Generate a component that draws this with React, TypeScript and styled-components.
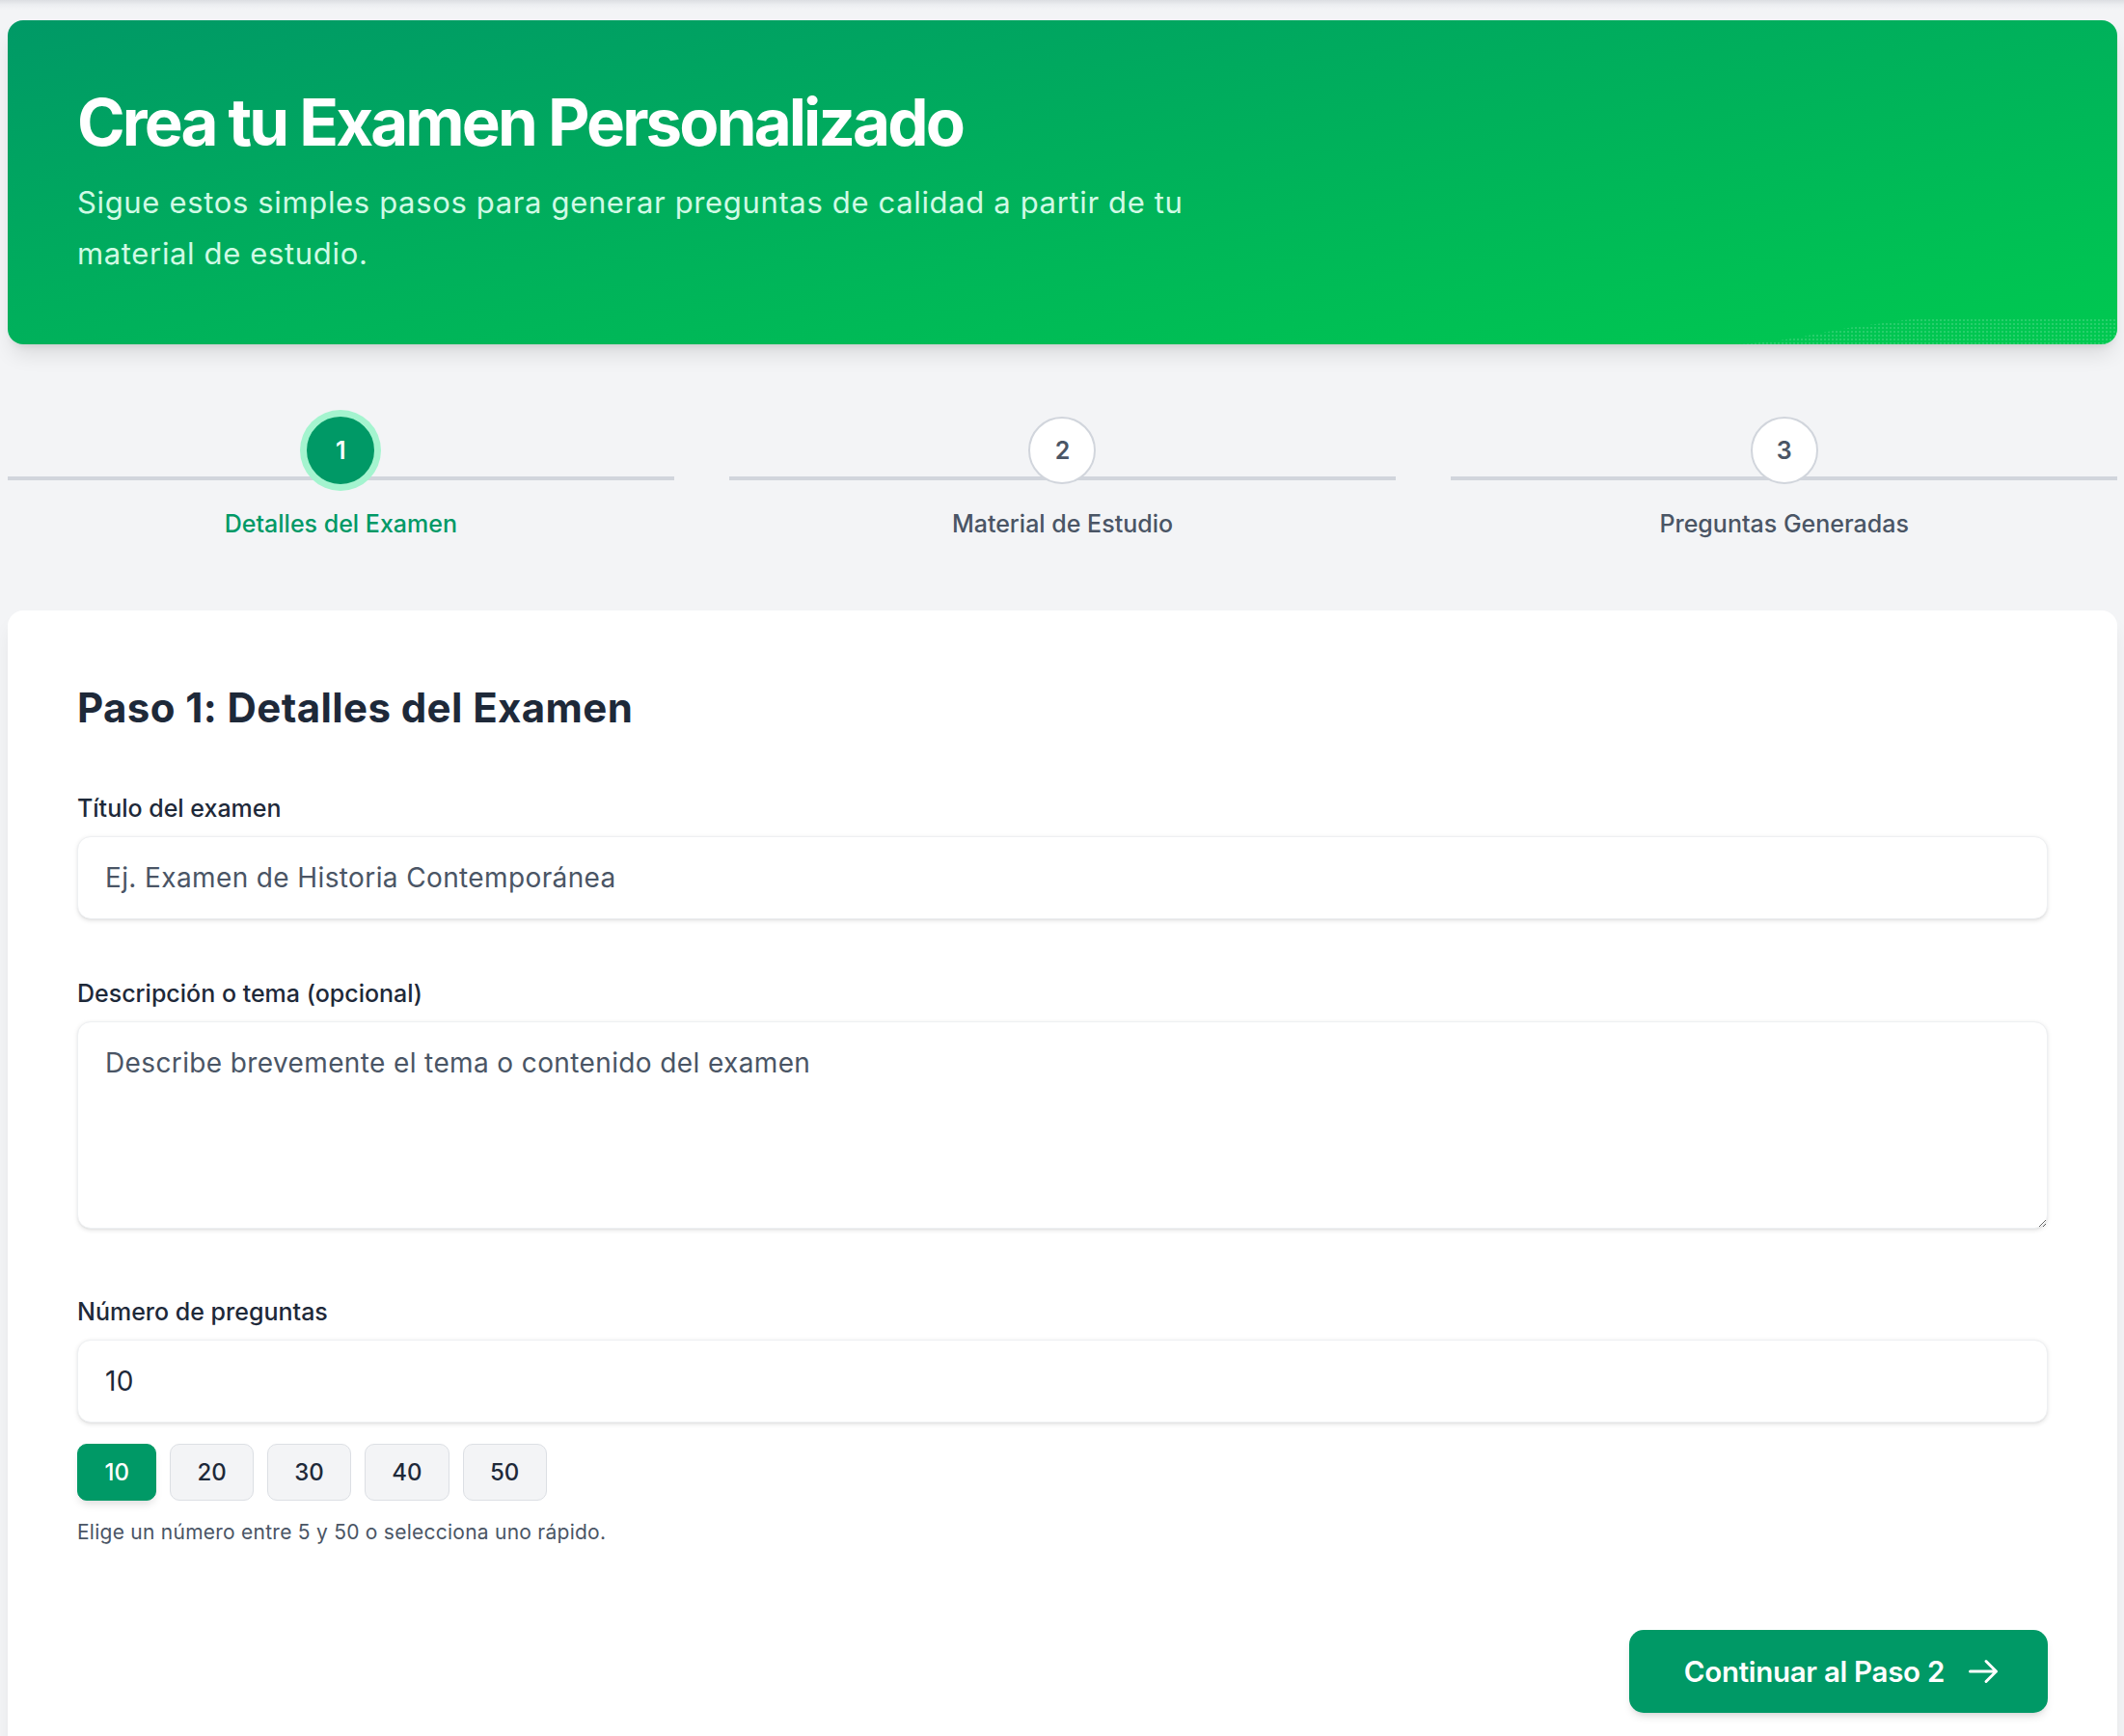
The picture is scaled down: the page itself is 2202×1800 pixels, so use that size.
import React, { useState } from "react";
import styled, { createGlobalStyle, css } from "styled-components";

const GlobalStyle = createGlobalStyle`
  html, body {
    margin: 0;
    padding: 0;
    background: #f3f4f6;
  }
  body {
    font-family: Inter, "Noto Sans", "Liberation Sans", sans-serif;
    color: #1e2939;
    -webkit-font-smoothing: antialiased;
  }
  * {
    box-sizing: border-box;
  }
`;

const Page = styled.div`
  height: 1800px;
  padding: 21px 7px 0 8px;
  background:
    linear-gradient(#dcdee2 0, #eceef1 5px, #f3f4f6 10px) top / 100% 21px no-repeat,
    #f3f4f6;
  overflow: hidden;
`;

/* ---------- hero ---------- */

const Hero = styled.header`
  position: relative;
  overflow: hidden;
  padding: 72px 72px 67.8px;
  border-radius: 16px;
  background: linear-gradient(to bottom right, #009966, #00c950);
  box-shadow:
    0 14px 21px -4px rgba(0, 0, 0, 0.1),
    0 6px 8px -5px rgba(0, 0, 0, 0.1);
`;

const HeroTitle = styled.h1`
  margin: 0 0 23px;
  font-size: 67.2px;
  line-height: 67.2px;
  font-weight: 700;
  letter-spacing: -2.88px;
  color: #ffffff;
`;

const HeroText = styled.p`
  margin: 0;
  max-width: 1254px;
  font-size: 31px;
  line-height: 53px;
  letter-spacing: 0.65px;
  color: #d0fae5;
`;

const HeroWave = styled.svg`
  position: absolute;
  right: 0;
  bottom: 0;
  width: 400px;
  height: 30px;
  pointer-events: none;
`;

/* ---------- stepper ---------- */

const Stepper = styled.ol`
  list-style: none;
  margin: 75px 0 72.5px;
  padding: 0;
  display: grid;
  grid-template-columns: repeat(3, 1fr);
  column-gap: 57.5px;
`;

const Step = styled.li`
  position: relative;
  display: flex;
  flex-direction: column;
  align-items: center;

  &::before {
    content: "";
    position: absolute;
    left: 0;
    right: 0;
    top: 50%;
    height: 4px;
    margin-top: -2px;
    background: #d1d5dc;
  }
`;

const StepCircle = styled.div<{ $active?: boolean }>`
  position: relative;
  z-index: 1;
  width: 70px;
  height: 70px;
  border-radius: 50%;
  display: flex;
  align-items: center;
  justify-content: center;
  font-size: 25px;
  font-weight: 600;
  background: ${(p) => (p.$active ? "#009966" : "#ffffff")};
  color: ${(p) => (p.$active ? "#ffffff" : "#4a5565")};
  border: 2.8px solid ${(p) => (p.$active ? "#009966" : "#d1d5dc")};
  box-shadow: ${(p) => (p.$active ? "0 0 0 7px #a4f4cf" : "none")};
`;

const StepLabel = styled.span<{ $active?: boolean }>`
  margin-top: 22.5px;
  font-size: 25px;
  line-height: 36px;
  font-weight: 500;
  color: ${(p) => (p.$active ? "#009966" : "#4a5565")};
`;

/* ---------- card / form ---------- */

const Card = styled.section`
  background: #ffffff;
  border-radius: 16px;
  padding: 76px 72px 120px;
  box-shadow:
    0 14px 21px -4px rgba(0, 0, 0, 0.08),
    0 6px 8px -5px rgba(0, 0, 0, 0.06);
`;

const CardTitle = styled.h2`
  margin: 0 0 60.3px;
  font-size: 42px;
  line-height: 50.4px;
  font-weight: 700;
  letter-spacing: 0.4px;
  color: #1e2939;
`;

const Form = styled.form`
  display: flex;
  flex-direction: column;
  gap: 59.4px;
`;

const Field = styled.div`
  display: flex;
  flex-direction: column;
`;

const Label = styled.label`
  display: block;
  margin-bottom: 11px;
  font-size: 25px;
  line-height: 36px;
  font-weight: 500;
  color: #1e2939;
`;

const inputBase = css`
  display: block;
  width: 100%;
  margin: 0;
  padding: 21px 28px;
  font-family: inherit;
  font-size: 28px;
  line-height: 42px;
  letter-spacing: 0.38px;
  color: #1e2939;
  background: #ffffff;
  border: 1px solid #eef0f2;
  border-radius: 14px;
  box-shadow:
    0 1.4px 4px rgba(0, 0, 0, 0.1),
    0 1px 2px -1px rgba(0, 0, 0, 0.1);
  outline: none;

  &::placeholder {
    color: #4a5565;
    opacity: 1;
  }
`;

const TextInput = styled.input`
  ${inputBase}
`;

const TextArea = styled.textarea`
  ${inputBase}
  height: 215px;
  margin-bottom: 8.8px;
  resize: vertical;
`;

const QuickRow = styled.div`
  display: flex;
  gap: 13.5px;
  margin-top: 22px;
`;

const QuickButton = styled.button<{ $active?: boolean }>`
  height: 59px;
  padding: 0 27.5px;
  border-radius: 10px;
  font-family: inherit;
  font-size: 24px;
  font-weight: 500;
  cursor: pointer;
  border: 1.4px solid ${(p) => (p.$active ? "#009966" : "#dcdfe4")};
  background: ${(p) => (p.$active ? "#009966" : "#f3f4f6")};
  color: ${(p) => (p.$active ? "#ffffff" : "#1e2939")};
  box-shadow: ${(p) =>
    p.$active ? "0 6px 10px -3px rgba(0, 0, 0, 0.15)" : "none"};
`;

const Helper = styled.p`
  margin: 17.4px 0 0;
  font-size: 21px;
  line-height: 30px;
  letter-spacing: 0.25px;
  color: #4a5565;
`;

const Footer = styled.div`
  display: flex;
  justify-content: flex-end;
  margin-top: 86.8px;
`;

const ContinueButton = styled.button`
  display: inline-flex;
  align-items: center;
  gap: 22px;
  height: 86px;
  padding: 0 49px 0 57px;
  border: none;
  border-radius: 15px;
  background: #009966;
  color: #ffffff;
  font-family: inherit;
  font-size: 29.5px;
  font-weight: 600;
  letter-spacing: -0.3px;
  cursor: pointer;
  box-shadow:
    0 6px 10px -3px rgba(0, 0, 0, 0.15),
    0 3px 6px -4px rgba(0, 0, 0, 0.1);
`;

const ArrowIcon = () => (
  <svg
    width="36"
    height="36"
    viewBox="0 0 24 24"
    fill="none"
    stroke="currentColor"
    strokeWidth="2"
    strokeLinecap="round"
    strokeLinejoin="round"
  >
    <path d="M14 5l7 7m0 0l-7 7m7-7H3" />
  </svg>
);

const steps = ["Detalles del Examen", "Material de Estudio", "Preguntas Generadas"];
const quickCounts = [10, 20, 30, 40, 50];

export default function App() {
  const [count, setCount] = useState("10");

  return (
    <Page>
      <GlobalStyle />
      <Hero>
        <HeroTitle>Crea tu Examen Personalizado</HeroTitle>
        <HeroText>
          Sigue estos simples pasos para generar preguntas de calidad a partir de tu
          material de estudio.
        </HeroText>
        <HeroWave viewBox="0 0 400 30" preserveAspectRatio="none">
          <defs>
            <pattern id="dots" width="4" height="4" patternUnits="userSpaceOnUse">
              <circle cx="1" cy="1" r="0.8" fill="rgba(255,255,255,0.35)" />
            </pattern>
          </defs>
          <path
            d="M0 30 C 60 29 100 14 150 9 C 180 5 195 2 220 2 L400 2 L400 30 Z"
            fill="url(#dots)"
          />
        </HeroWave>
      </Hero>

      <Stepper>
        {steps.map((label, i) => (
          <Step key={label}>
            <StepCircle $active={i === 0}>{i + 1}</StepCircle>
            <StepLabel $active={i === 0}>{label}</StepLabel>
          </Step>
        ))}
      </Stepper>

      <Card>
        <CardTitle>Paso 1: Detalles del Examen</CardTitle>
        <Form onSubmit={(e) => e.preventDefault()}>
          <Field>
            <Label htmlFor="titulo">Título del examen</Label>
            <TextInput id="titulo" placeholder="Ej. Examen de Historia Contemporánea" />
          </Field>
          <Field>
            <Label htmlFor="descripcion">Descripción o tema (opcional)</Label>
            <TextArea
              id="descripcion"
              placeholder="Describe brevemente el tema o contenido del examen"
            />
          </Field>
          <Field>
            <Label htmlFor="numero">Número de preguntas</Label>
            <TextInput
              id="numero"
              type="number"
              min={5}
              max={50}
              value={count}
              onChange={(e) => setCount(e.target.value)}
            />
            <QuickRow>
              {quickCounts.map((n) => (
                <QuickButton
                  key={n}
                  type="button"
                  $active={String(n) === count}
                  onClick={() => setCount(String(n))}
                >
                  {n}
                </QuickButton>
              ))}
            </QuickRow>
            <Helper>Elige un número entre 5 y 50 o selecciona uno rápido.</Helper>
          </Field>
        </Form>
        <Footer>
          <ContinueButton type="button">
            Continuar al Paso 2
            <ArrowIcon />
          </ContinueButton>
        </Footer>
      </Card>
    </Page>
  );
}
